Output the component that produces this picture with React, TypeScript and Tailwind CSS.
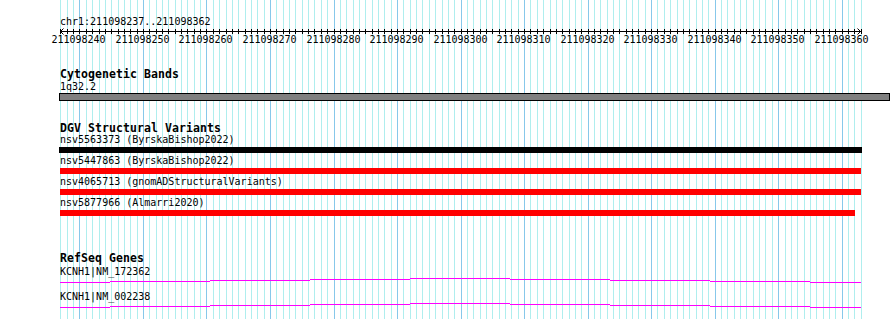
import React from "react";

// Genome browser view: chr1:211098237..211098362
const X0 = 60.4;
const BP = 6.352;
const lineX = (k: number) => Math.round(X0 + k * BP);
const LINES = Array.from({ length: 127 }, (_, k) => k);
const MAJOR = LINES.filter((k) => (k - 3) % 10 === 0);

const variants = [
  { id: "nsv5563373 (ByrskaBishop2022)", color: "bg-black", bar: "ml-[59px] w-[803px]" },
  { id: "nsv5447863 (ByrskaBishop2022)", color: "bg-[#ff0000]", bar: "ml-[60px] w-[801px]" },
  { id: "nsv4065713 (gnomADStructuralVariants)", color: "bg-[#ff0000]", bar: "ml-[60px] w-[801px]" },
  { id: "nsv5877966 (Almarri2020)", color: "bg-[#ff0000]", bar: "ml-[60px] w-[795px]" },
];

const genes = ["KCNH1|NM_172362", "KCNH1|NM_002238"];

// intron line drawn as a shallow arc, one pixel step per 100px
const arc = [
  [60, 110, 5],
  [110, 210, 4],
  [210, 310, 3],
  [310, 410, 2],
  [410, 510, 1],
  [510, 610, 2],
  [610, 710, 3],
  [710, 810, 4],
  [810, 861, 5],
];

const Grid = () => (
  <svg className="absolute inset-0" width={890} height={319} shapeRendering="crispEdges">
    {LINES.map((k) => (
      <rect
        key={k}
        x={lineX(k)}
        y={0}
        width={1}
        height={319}
        fill={(k - 3) % 10 === 0 ? "#87c8ea" : "#afeeee"}
      />
    ))}
  </svg>
);

const Ruler = () => (
  <svg width={890} height={22} className="block">
    <g shapeRendering="crispEdges">
      <rect x={60} y={4} width={801} height={1} fill="#000" />
      {LINES.map((k) => (
        <rect key={k} x={lineX(k)} y={2} width={1} height={5} fill="#000" />
      ))}
    </g>
    <path d="M63.5 1.5 L60.5 4.5 L63.5 7.5" stroke="#000" fill="none" />
    <path d="M857.5 1.5 L860.5 4.5 L857.5 7.5" stroke="#000" fill="none" />
    {MAJOR.map((k) => (
      <text key={k} x={lineX(k) - 0.5} y={16} fontSize={10} textAnchor="middle" fill="#000">
        {211098237 + k}
      </text>
    ))}
  </svg>
);

const TrackTitle = ({ children, className }: { children: React.ReactNode; className: string }) => (
  <div className={`pl-[60px] h-[12px] text-[11.5px] leading-[12px] font-bold tracking-[0.08px] ${className}`}>
    {children}
  </div>
);

const Label = ({ children, className = "" }: { children: React.ReactNode; className?: string }) => (
  <div className={`pl-[60px] h-[11px] text-[10px] leading-[11px] whitespace-pre ${className}`}>{children}</div>
);

export default function App() {
  return (
    <div className="relative w-[890px] h-[319px] overflow-hidden bg-white text-black font-['DejaVu_Sans_Mono',monospace]">
      <Grid />

      <div className="relative flex flex-col">
        {/* Ruler */}
        <Label className="mt-[16px]">chr1:211098237..211098362</Label>
        <Ruler />

        {/* Cytogenetic Bands */}
        <TrackTitle className="mt-[19px]">Cytogenetic Bands</TrackTitle>
        <Label className="mt-[1px]">1q32.2</Label>
        <div className="mt-[1px] ml-[59px] h-[8px] border border-black bg-[#808080]" />

        {/* DGV Structural Variants */}
        <TrackTitle className="mt-[21px]">DGV Structural Variants</TrackTitle>
        {variants.map((v, i) => (
          <div key={v.id} className={i === 0 ? "" : "mt-[2px]"}>
            <Label>{v.id}</Label>
            <div className={`mt-[2px] h-[6px] ${v.bar} ${v.color}`} />
          </div>
        ))}

        {/* RefSeq Genes */}
        <TrackTitle className="mt-[36px]">RefSeq Genes</TrackTitle>
        {genes.map((g, i) => (
          <div key={g} className={i === 0 ? "mt-[2px]" : ""}>
            <Label>{g}</Label>
            <svg width={890} height={14} className="block" shapeRendering="crispEdges">
              {arc.map(([a, b, y]) => (
                <rect key={a} x={a} y={y} width={b - a} height={1} fill="#ff00ff" />
              ))}
            </svg>
          </div>
        ))}
      </div>
    </div>
  );
}
